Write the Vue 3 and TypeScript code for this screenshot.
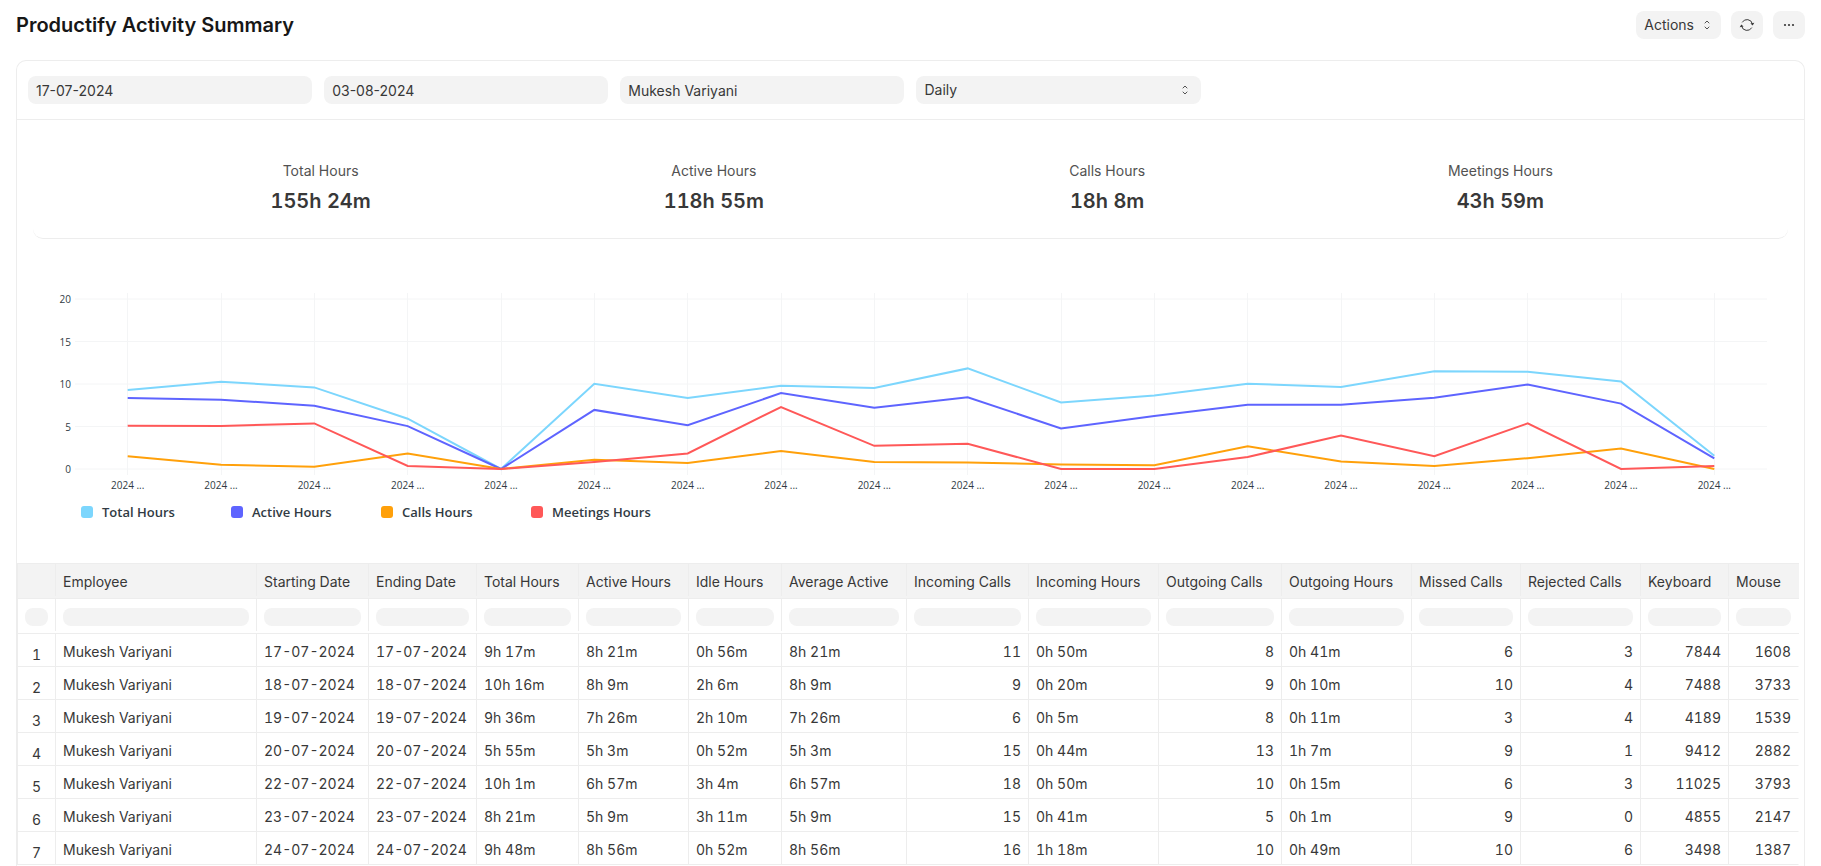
<script setup lang="ts">
import { computed, onBeforeUnmount, onMounted, ref } from 'vue'

interface Series {
  name: string
  color: string
  values: number[]
}

interface Column {
  key: string
  label: string
  width: number
  numeric?: boolean
}

const fromDate = ref('17-07-2024')
const toDate = ref('03-08-2024')
const employee = ref('Mukesh Variyani')
const range = ref('Daily')

const summary = [
  { label: 'Total Hours', value: '155h 24m' },
  { label: 'Active Hours', value: '118h 55m' },
  { label: 'Calls Hours', value: '18h 8m' },
  { label: 'Meetings Hours', value: '43h 59m' },
]

const series: Series[] = [
  {
    name: 'Total Hours',
    color: '#7cd6fd',
    values: [9.28, 10.27, 9.6, 5.92, 0, 10.02, 8.35, 9.8, 9.53, 11.84, 7.84, 8.63, 10.04, 9.63, 11.49, 11.45, 10.29, 1.57],
  },
  {
    name: 'Active Hours',
    color: '#5e64ff',
    values: [8.35, 8.15, 7.43, 5.05, 0, 6.95, 5.15, 8.93, 7.2, 8.43, 4.78, 6.23, 7.57, 7.57, 8.39, 9.94, 7.69, 1.25],
  },
  {
    name: 'Calls Hours',
    color: '#ffa00a',
    values: [1.49, 0.51, 0.27, 1.84, 0, 1.08, 0.71, 2.12, 0.84, 0.76, 0.53, 0.45, 2.67, 0.88, 0.37, 1.27, 2.41, 0],
  },
  {
    name: 'Meetings Hours',
    color: '#ff5858',
    values: [5.1, 5.06, 5.37, 0.35, 0, 0.82, 1.82, 7.29, 2.73, 2.98, 0, 0, 1.41, 3.94, 1.49, 5.37, 0, 0.35],
  },
]

const chartEl = ref<HTMLElement | null>(null)
const chartWidth = ref(1787)
let observer: ResizeObserver | undefined

onMounted(() => {
  if (!chartEl.value) return
  chartWidth.value = chartEl.value.clientWidth
  observer = new ResizeObserver((entries) => {
    chartWidth.value = entries[0].contentRect.width
  })
  observer.observe(chartEl.value)
})
onBeforeUnmount(() => observer?.disconnect())

const plotLeft = 64
const plotRightGap = 43
const baseline = 230
const unit = 8.5
const ticks = [20, 15, 10, 5, 0]

const plotRight = computed(() => chartWidth.value - plotRightGap)
const step = computed(() => (plotRight.value - plotLeft) / 18)
const xs = computed(() => Array.from({ length: 18 }, (_, i) => plotLeft + step.value * (i + 0.5)))
const yOf = (v: number) => baseline - v * unit
const lines = computed(() =>
  series.map((s) => ({
    color: s.color,
    points: s.values.map((v, i) => `${xs.value[i].toFixed(1)},${yOf(v).toFixed(1)}`).join(' '),
  })),
)

const columns: Column[] = [
  { key: 'employee', label: 'Employee', width: 201 },
  { key: 'start', label: 'Starting Date', width: 112 },
  { key: 'end', label: 'Ending Date', width: 108 },
  { key: 'total', label: 'Total Hours', width: 102 },
  { key: 'active', label: 'Active Hours', width: 110 },
  { key: 'idle', label: 'Idle Hours', width: 93 },
  { key: 'average', label: 'Average Active', width: 125 },
  { key: 'inCalls', label: 'Incoming Calls', width: 122, numeric: true },
  { key: 'inHours', label: 'Incoming Hours', width: 130 },
  { key: 'outCalls', label: 'Outgoing Calls', width: 123, numeric: true },
  { key: 'outHours', label: 'Outgoing Hours', width: 130 },
  { key: 'missed', label: 'Missed Calls', width: 109, numeric: true },
  { key: 'rejected', label: 'Rejected Calls', width: 120, numeric: true },
  { key: 'keyboard', label: 'Keyboard', width: 88, numeric: true },
  { key: 'mouse', label: 'Mouse', width: 70, numeric: true },
]

const name = 'Mukesh Variyani'
const rows: (string | number)[][] = [
  [name, '17-07-2024', '17-07-2024', '9h 17m', '8h 21m', '0h 56m', '8h 21m', 11, '0h 50m', 8, '0h 41m', 6, 3, 7844, 1608],
  [name, '18-07-2024', '18-07-2024', '10h 16m', '8h 9m', '2h 6m', '8h 9m', 9, '0h 20m', 9, '0h 10m', 10, 4, 7488, 3733],
  [name, '19-07-2024', '19-07-2024', '9h 36m', '7h 26m', '2h 10m', '7h 26m', 6, '0h 5m', 8, '0h 11m', 3, 4, 4189, 1539],
  [name, '20-07-2024', '20-07-2024', '5h 55m', '5h 3m', '0h 52m', '5h 3m', 15, '0h 44m', 13, '1h 7m', 9, 1, 9412, 2882],
  [name, '22-07-2024', '22-07-2024', '10h 1m', '6h 57m', '3h 4m', '6h 57m', 18, '0h 50m', 10, '0h 15m', 6, 3, 11025, 3793],
  [name, '23-07-2024', '23-07-2024', '8h 21m', '5h 9m', '3h 11m', '5h 9m', 15, '0h 41m', 5, '0h 1m', 9, 0, 4855, 2147],
  [name, '24-07-2024', '24-07-2024', '9h 48m', '8h 56m', '0h 52m', '8h 56m', 16, '1h 18m', 10, '0h 49m', 10, 6, 3498, 1387],
]
</script>

<template>
  <div class="page">
    <header class="page-head">
      <h1 class="title">Productify Activity Summary</h1>
      <div class="head-actions">
        <button type="button" class="btn">
          Actions
          <svg class="chevrons" viewBox="0 0 12 12" aria-hidden="true">
            <path d="M4 4 6 2l2 2M4 8l2 2 2-2" />
          </svg>
        </button>
        <button type="button" class="btn icon-btn" aria-label="Refresh">
          <svg class="refresh" viewBox="0 0 16 16" aria-hidden="true">
            <path class="arc" d="M3.2 5.4A5.5 5.5 0 0 1 13.4 7M12.8 10.6A5.5 5.5 0 0 1 2.6 9" />
            <path class="head" d="M11.4 6.5 15.3 5.7 13.7 8.6ZM4.6 9.5.7 10.3 2.3 7.4Z" />
          </svg>
        </button>
        <button type="button" class="btn icon-btn" aria-label="Menu">
          <svg class="dots" viewBox="0 0 16 16" aria-hidden="true">
            <circle cx="4" cy="8" r="1.1" />
            <circle cx="8" cy="8" r="1.1" />
            <circle cx="12" cy="8" r="1.1" />
          </svg>
        </button>
      </div>
    </header>

    <main class="card">
      <form class="filters" @submit.prevent>
        <input v-model="fromDate" class="field" type="text" aria-label="From Date" />
        <input v-model="toDate" class="field" type="text" aria-label="To Date" />
        <input v-model="employee" class="field" type="text" aria-label="Employee" />
        <div class="select-wrap">
          <select v-model="range" class="field" aria-label="Range">
            <option>Daily</option>
            <option>Weekly</option>
            <option>Monthly</option>
          </select>
          <svg class="chevrons select-icon" viewBox="0 0 12 12" aria-hidden="true">
            <path d="M4 4 6 2l2 2M4 8l2 2 2-2" />
          </svg>
        </div>
      </form>

      <section class="summary">
        <div v-for="item in summary" :key="item.label" class="summary-item">
          <span class="summary-label">{{ item.label }}</span>
          <span class="summary-value">{{ item.value }}</span>
        </div>
      </section>

      <section ref="chartEl" class="chart">
        <svg class="plot" :width="chartWidth" height="256" role="img" aria-label="Hours per day">
          <g class="grid">
            <line v-for="t in ticks" :key="t" :x1="plotLeft - 6" :x2="plotRight + 6" :y1="yOf(t)" :y2="yOf(t)" />
            <line v-for="(x, i) in xs" :key="i" :x1="Math.floor(x) + 0.5" :x2="Math.floor(x) + 0.5" y1="54" y2="236" />
          </g>
          <g class="axis">
            <text v-for="t in ticks" :key="t" class="tick" :x="plotLeft - 10" :y="yOf(t) + 4">{{ t }}</text>
            <text v-for="(x, i) in xs" :key="i" class="day" :x="x" y="250">2024 ...</text>
          </g>
          <polyline v-for="l in lines" :key="l.color" class="series" :points="l.points" :stroke="l.color" />
        </svg>
        <ul class="legend">
          <li v-for="s in series" :key="s.name" class="legend-item">
            <span class="swatch" :style="{ background: s.color }"></span>{{ s.name }}
          </li>
        </ul>
      </section>

      <table class="grid-table">
        <colgroup>
          <col :style="{ width: '39px' }" />
          <col v-for="c in columns" :key="c.key" :style="{ width: c.width + 'px' }" />
        </colgroup>
        <thead>
          <tr class="head-row">
            <th class="index" aria-label="Row"><div class="head-cell"></div></th>
            <th v-for="c in columns" :key="c.key" scope="col"><div class="head-cell">{{ c.label }}</div></th>
          </tr>
          <tr class="filter-row">
            <td class="index">
              <div class="head-cell"><input class="pill" type="text" aria-label="Filter row number" /></div>
            </td>
            <td v-for="c in columns" :key="c.key">
              <div class="head-cell"><input class="pill" type="text" :aria-label="'Filter ' + c.label" /></div>
            </td>
          </tr>
        </thead>
        <tbody>
          <tr v-for="(row, r) in rows" :key="r" class="body-row">
            <td class="index number">{{ r + 1 }}</td>
            <td v-for="(c, i) in columns" :key="c.key" :class="{ numeric: c.numeric }">{{ row[i] }}</td>
          </tr>
        </tbody>
      </table>
    </main>
  </div>
</template>

<style>
body {
  margin: 0;
  background: #fff;
}
</style>

<style scoped>
.page {
  box-sizing: border-box;
  display: flex;
  flex-direction: column;
  min-height: 100vh;
  padding: 0 16px;
  font-family: Inter, "Liberation Sans", sans-serif;
  font-size: 14px;
  line-height: 20px;
  color: #383838;
}
.page-head {
  display: flex;
  align-items: center;
  justify-content: space-between;
  height: 50px;
  margin-bottom: 10px;
}
.title {
  margin: 0;
  font-size: 20px;
  line-height: 24px;
  font-weight: 600;
  color: #171717;
}
.head-actions {
  display: flex;
  gap: 10px;
}
.btn {
  display: flex;
  align-items: center;
  justify-content: center;
  gap: 7px;
  height: 28px;
  padding: 0 8px;
  border: 0;
  border-radius: 8px;
  background: #f3f3f3;
  font: inherit;
  color: #383838;
}
.icon-btn {
  width: 32px;
}
.chevrons {
  width: 12px;
  height: 12px;
  fill: none;
  stroke: #525252;
  stroke-linecap: round;
  stroke-linejoin: round;
}
.refresh {
  flex: none;
  width: 16px;
  height: 16px;
}
.refresh .arc {
  fill: none;
  stroke: #383838;
}
.refresh .head {
  fill: #383838;
}
.dots {
  flex: none;
  width: 16px;
  height: 16px;
  fill: #383838;
}
.card {
  flex: 1;
  border: 1px solid #ededed;
  border-bottom: 0;
  border-radius: 10px 10px 0 0;
}
.filters {
  display: grid;
  grid-template-columns: repeat(6, 1fr);
  gap: 12px;
  padding: 15px 11px;
  border-bottom: 1px solid #ededed;
}
.field {
  box-sizing: border-box;
  display: block;
  width: 100%;
  height: 28px;
  padding: 0 8px;
  border: 0;
  border-radius: 8px;
  background: #f3f3f3;
  font: inherit;
  color: #383838;
  appearance: none;
}
.select-wrap {
  position: relative;
}
.select-icon {
  position: absolute;
  top: 8px;
  right: 10px;
  pointer-events: none;
}
.summary {
  display: grid;
  grid-template-columns: repeat(4, 1fr);
  margin: 0 16px;
  padding: 41px 91px 25px;
  border-bottom: 1px solid #ededed;
  border-radius: 10px;
}
.summary-item {
  display: flex;
  flex-direction: column;
  align-items: center;
  gap: 8px;
}
.summary-label {
  color: #525252;
}
.summary-value {
  font-size: 20px;
  line-height: 24px;
  font-weight: 600;
  font-variant-numeric: tabular-nums;
}
.chart {
  padding-bottom: 41px;
}
.plot {
  display: block;
}
.grid line {
  stroke: #f4f5f6;
}
.axis {
  font-family: "Open Sans", "Noto Sans", sans-serif;
  font-size: 10px;
  fill: #313b44;
}
.tick {
  text-anchor: end;
}
.day {
  text-anchor: middle;
}
.series {
  fill: none;
  stroke-width: 2;
}
.legend {
  display: flex;
  margin: 0;
  padding: 7px 0 0 64px;
  list-style: none;
  font-family: "Open Sans", "Noto Sans", sans-serif;
  font-size: 13px;
  font-weight: 600;
  color: #313b44;
}
.legend-item {
  display: flex;
  align-items: center;
  gap: 9px;
  width: 150px;
}
.swatch {
  width: 12px;
  height: 12px;
  border-radius: 3px;
}
.grid-table {
  width: calc(100% - 5px);
  table-layout: fixed;
  border-collapse: separate;
  border-spacing: 0;
  border-top: 1px solid #ededed;
  font-variant-numeric: tabular-nums;
}
.grid-table th,
.grid-table td {
  box-sizing: border-box;
  padding: 0;
  border-bottom: 1px solid #ededed;
  font-weight: 400;
  text-align: left;
  white-space: nowrap;
}
.grid-table .index {
  border-left: 1px solid #ededed;
}
.head-row th {
  background: #f3f3f3;
}
.head-cell {
  box-sizing: border-box;
  display: flex;
  align-items: center;
  height: 32px;
  margin-bottom: 2px;
  padding: 4px 7px 0;
  border-right: 1px solid #ededed;
}
.pill {
  box-sizing: border-box;
  width: 100%;
  min-width: 0;
  height: 18px;
  padding: 0 6px;
  border: 0;
  border-radius: 8px;
  background: #f3f3f3;
  font: inherit;
}
.grid-table .body-row td {
  height: 33px;
  padding: 4px 7px 0;
  border-right: 1px solid #ededed;
}
.grid-table .body-row .numeric {
  text-align: right;
}
.grid-table .body-row .number {
  padding: 10px 0 0;
  text-align: center;
}
.grid-table .body-row td:last-child,
.grid-table tr > :last-child .head-cell {
  border-right-color: transparent;
}
</style>
